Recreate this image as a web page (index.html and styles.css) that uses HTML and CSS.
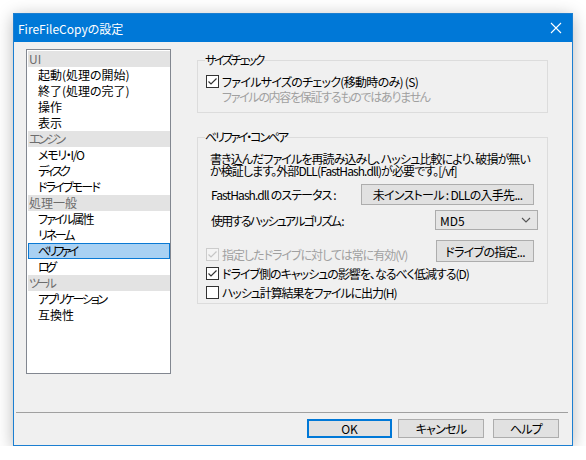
FILE: index.html
```html
<!DOCTYPE html>
<html lang="ja">
<head>
<meta charset="utf-8">
<title>FireFileCopyの設定</title>
<link rel="stylesheet" href="styles.css">
</head>
<body>
<div class="window">
  <div class="titlebar">
    <span class="title">FireFileCopyの設定</span>
    <span class="close"><svg width="12" height="12" viewBox="0 0 12 12"><path d="M1 1 L11 11 M11 1 L1 11" stroke="#fff" stroke-width="1.1" fill="none"/></svg></span>
  </div>
  <div class="body">
    <div class="main">
      <ul class="list">
        <li class="cat">UI</li>
        <li class="item">起動(処理の開始)</li>
        <li class="item">終了(処理の完了)</li>
        <li class="item">操作</li>
        <li class="item">表示</li>
        <li class="cat ls25">エンジン</li>
        <li class="item ls13">メモリ・I/O</li>
        <li class="item ls28">ディスク</li>
        <li class="item ls18">ドライブモード</li>
        <li class="cat">処理一般</li>
        <li class="item ls18">ファイル属性</li>
        <li class="item ls22">リネーム</li>
        <li class="item selected ls28">ベリファイ</li>
        <li class="item ls35">ログ</li>
        <li class="cat ls32">ツール</li>
        <li class="item ls22">アプリケーション</li>
        <li class="item">互換性</li>
      </ul>
      <div class="panel">
        <fieldset class="group g1">
          <legend><span class="ls22">サイズチェック</span></legend>
          <div class="check ls07"><span class="box"><svg width="11" height="11" viewBox="0 0 11 11"><path d="M1.5 5.5 L4 8 L9.5 2.5" stroke="#333" stroke-width="1.2" fill="none"/></svg></span><span>ファイルサイズのチェック(移動時のみ) (S)</span></div>
          <div class="note ls13">ファイルの内容を保証するものではありません</div>
        </fieldset>
        <fieldset class="group g2">
          <legend><span class="ls22">ベリファイ・コンペア</span></legend>
          <div class="desc ls09">書き込んだファイルを再読み込みし、ハッシュ比較により、破損が無い<br>か検証します。外部DLL(FastHash.dll)が必要です。[/vf]</div>
          <div class="row r-status">
            <span class="lbl ls09">FastHash.dll のステータス :</span>
            <span class="btn btn-dll ls07">未インストール : DLLの入手先...</span>
          </div>
          <div class="row r-algo">
            <span class="lbl ls17">使用するハッシュアルゴリズム :</span>
            <span class="combo"><span>MD5</span><svg width="10" height="6" viewBox="0 0 10 6"><path d="M1 1 L5 5 L9 1" stroke="#555" stroke-width="1.1" fill="none"/></svg></span>
          </div>
          <div class="row r-drive">
            <div class="check disabled ls10"><span class="box"><svg width="11" height="11" viewBox="0 0 11 11"><path d="M1.5 5.5 L4 8 L9.5 2.5" stroke="#c6c6c6" stroke-width="1.2" fill="none"/></svg></span><span>指定したドライブに対しては常に有効(V)</span></div>
            <span class="btn btn-drive ls07">ドライブの指定...</span>
          </div>
          <div class="check c2 ls10"><span class="box"><svg width="11" height="11" viewBox="0 0 11 11"><path d="M1.5 5.5 L4 8 L9.5 2.5" stroke="#333" stroke-width="1.2" fill="none"/></svg></span><span>ドライブ側のキャッシュの影響を、なるべく低減する(D)</span></div>
          <div class="check c3 ls11"><span class="box"></span><span>ハッシュ計算結果をファイルに出力(H)</span></div>
        </fieldset>
      </div>
    </div>
    <div class="sep"></div>
    <div class="buttons">
      <span class="btn btn-ok">OK</span>
      <span class="btn btn-cancel ls07">キャンセル</span>
      <span class="btn btn-help ls07">ヘルプ</span>
    </div>
  </div>
</div>
</body>
</html>
```

FILE: styles.css
```css
html, body {
  margin: 0;
  padding: 0;
  background: #ffffff;
}
body {
  font-family: "Noto Sans CJK JP", "Noto Sans", sans-serif;
  font-size: 12px;
  color: #000;
  font-feature-settings: "palt";
}
.ls07 { letter-spacing: -0.7px; }
.ls09 { letter-spacing: -0.9px; }
.ls10 { letter-spacing: -1.0px; }
.ls11 { letter-spacing: -1.1px; }
.ls13 { letter-spacing: -1.3px; }
.ls17 { letter-spacing: -1.7px; }
.ls18 { letter-spacing: -1.8px; }
.ls22 { letter-spacing: -2.2px; }
.ls25 { letter-spacing: -2.5px; }
.ls28 { letter-spacing: -2.8px; }
.ls32 { letter-spacing: -3.2px; }
.ls35 { letter-spacing: -3.5px; }
.window {
  margin: 13px 0 0 13px;
  width: 558px;
  height: 431px;
  border: 1px solid #1c7fd1;
  background: #f0f0f0;
  box-shadow: 0 3px 16px rgba(0, 0, 0, 0.28);
  display: flex;
  flex-direction: column;
}
.titlebar {
  height: 28px;
  background: #0078d7;
  color: #fff;
  display: flex;
  align-items: center;
  justify-content: space-between;
  padding: 0 10px 0 4px;
}
.title {
  font-size: 12px;
}
.close {
  width: 12px;
  height: 12px;
  display: flex;
}
.body {
  flex: 1;
  display: flex;
  flex-direction: column;
}
.main {
  display: flex;
  padding: 7px 0 0 12px;
  height: 324px;
}
.list {
  list-style: none;
  margin: 0;
  padding: 1px 0 0 1px;
  width: 142px;
  height: 322px;
  background: #fff;
  border: 1px solid #828790;
  flex: none;
}
.list li {
  height: 16px;
  line-height: 16px;
  white-space: nowrap;
}
.cat {
  background: #e3e3e3;
  color: #6d6d6d;
  padding-left: 1px;
}
.item {
  padding-left: 10px;
}
.item.selected {
  background: #a9d1f3;
  border: 1px solid #0a79d4;
  height: 14px;
  line-height: 14px;
  padding-left: 9px;
}
.panel {
  margin-left: 26px;
  margin-top: 4px;
  width: 351px;
}
.group {
  margin: 0;
  border: 1px solid #dcdcdc;
  padding: 0 8px;
  min-width: 0;
}
.group legend {
  padding: 0;
  margin-left: -1px;
  line-height: 14px;
  height: 14px;
}
.g1 {
  padding-top: 6px;
  padding-bottom: 7px;
}
.g2 {
  margin-top: 17px;
  padding-top: 9px;
  padding-bottom: 3px;
}
.check {
  display: flex;
  align-items: center;
  height: 16px;
  white-space: nowrap;
}
.box {
  width: 11px;
  height: 11px;
  border: 1px solid #333;
  background: #fff;
  margin-right: 3px;
  flex: none;
  display: flex;
  letter-spacing: 0;
}
.check.disabled {
  color: #a0a0a0;
}
.check.disabled .box {
  border-color: #cccccc;
  background: #f4f4f4;
}
.note {
  height: 16px;
  line-height: 16px;
  padding-left: 16px;
  color: #a0a0a0;
  white-space: nowrap;
}
.desc {
  line-height: 12px;
  padding-left: 4px;
  white-space: nowrap;
}
.lbl {
  white-space: nowrap;
}
.row {
  display: flex;
  align-items: center;
  justify-content: space-between;
  padding-left: 5px;
}
.r-status {
  margin-top: 7px;
  height: 21px;
  padding-right: 5px;
}
.r-algo {
  margin-top: 5px;
  height: 20px;
  padding-right: 1px;
}
.r-drive {
  margin-top: 11px;
  height: 21px;
  padding-left: 0;
  padding-right: 5px;
  align-items: flex-end;
}
.c2 {
  margin-top: 3px;
}
.c3 {
  margin-top: 3px;
}
.btn {
  display: flex;
  align-items: center;
  justify-content: center;
  box-sizing: border-box;
  background: #e1e1e1;
  border: 1px solid #adadad;
  white-space: nowrap;
}
.btn-dll {
  width: 173px;
  height: 21px;
}
.btn-drive {
  width: 98px;
  height: 22px;
}
.combo {
  box-sizing: border-box;
  width: 103px;
  height: 20px;
  background: #e5e5e5;
  border: 1px solid #acacac;
  display: flex;
  align-items: center;
  justify-content: space-between;
  padding: 0 6px 0 4px;
}
.sep {
  margin: 39px 4px 0 2px;
  height: 1px;
  background: #a0a0a0;
}
.buttons {
  display: flex;
  justify-content: flex-end;
  padding-right: 13px;
  margin-top: 6px;
}
.buttons .btn {
  height: 19px;
}
.btn-ok {
  width: 85px;
  border: 2px solid #0078d7;
}
.btn-cancel {
  width: 86px;
  margin-left: 6px;
}
.btn-help {
  width: 66px;
  margin-left: 9px;
}
```
